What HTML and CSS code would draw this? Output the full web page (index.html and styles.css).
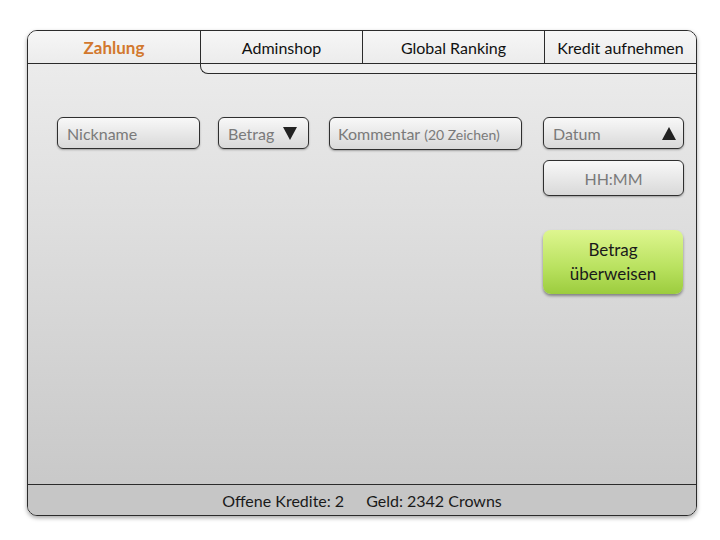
FILE: index.html
```html
<!DOCTYPE html>
<html>
<head>
  <meta charset="utf-8">
  <title>Zahlung</title>
  <link rel="stylesheet" href="styles.css">
</head>
<body>
  <div class="window">
    <div class="tabs">
      <div class="tab active">Zahlung</div>
      <div class="tab tab-admin">Adminshop</div>
      <div class="tab tab-ranking">Global Ranking</div>
      <div class="tab tab-kredit">Kredit aufnehmen</div>
    </div>
    <div class="tab-step"></div>

    <div class="content">
      <div class="field nickname">Nickname</div>
      <div class="field betrag">Betrag <span class="arrow-down"></span></div>
      <div class="field kommentar">Kommentar <small>(20 Zeichen)</small></div>

      <div class="side">
        <div class="field datum">Datum <span class="arrow-up"></span></div>
        <div class="field time">HH:MM</div>
        <button class="send">Betrag<br>überweisen</button>
      </div>
    </div>

    <div class="status">
      <span>Offene Kredite: 2</span>
      <span>Geld: 2342 Crowns</span>
    </div>
  </div>
</body>
</html>
```

FILE: styles.css
```css
* {
  margin: 0;
  padding: 0;
  box-sizing: border-box;
}

body {
  background: #fff;
  font-family: Lato, "Open Sans", sans-serif;
  width: 720px;
  height: 540px;
}

.window {
  margin: 30px 0 0 27px;
  width: 670px;
  height: 486px;
  border: 1px solid #2b2b2b;
  border-radius: 10px;
  background: linear-gradient(to bottom, #eeeeee, #c6c6c6);
  box-shadow: 0 2px 4px rgba(0, 0, 0, 0.35);
  display: flex;
  flex-direction: column;
  overflow: hidden;
}

/* Tab-Leiste */
.tabs {
  display: flex;
  height: 33px;
  border-bottom: 1px solid #2b2b2b;
  background: linear-gradient(to bottom, #f6f6f6, #ececec);
}

.tab {
  display: flex;
  align-items: center;
  justify-content: center;
  font-size: 16px;
  color: #111;
  border-left: 1px solid #2b2b2b;
}

.tab.active {
  width: 172px;
  border-left: none;
  color: #d2782e;
  font-weight: bold;
  font-size: 17px;
}

.tab-admin { width: 162px; }
.tab-ranking { width: 182px; }
.tab-kredit { flex: 1; }

.tab-step {
  margin-left: 172px;
  height: 10px;
  border-left: 1px solid #2b2b2b;
  border-bottom: 1px solid #2b2b2b;
  border-bottom-left-radius: 8px;
  background: #efefef;
}

/* Eingabefelder */
.content {
  flex: 1;
  display: flex;
  align-items: flex-start;
  padding: 43px 11px 0 29px;
}

.field {
  height: 32px;
  display: flex;
  align-items: center;
  padding: 0 9px;
  font-size: 16px;
  color: #7a7a7a;
  border: 1px solid #2f2f2f;
  border-radius: 6px;
  background: linear-gradient(to bottom, #f8f8f8, #d9d9d9);
  box-shadow: 0 1px 2px rgba(0, 0, 0, 0.3);
}

.field small {
  font-size: 14px;
  margin-left: 4px;
  margin-top: 2px;
}

.nickname { width: 143px; }

.betrag {
  width: 91px;
  margin-left: 18px;
  justify-content: space-between;
  padding-right: 11px;
}

.kommentar {
  width: 193px;
  height: 33px;
  margin-left: 20px;
  padding-left: 8px;
}

.side {
  width: 141px;
  margin-left: 21px;
  display: flex;
  flex-direction: column;
}

.datum {
  justify-content: space-between;
  padding-right: 7px;
}

.time {
  height: 36px;
  margin-top: 11px;
  justify-content: center;
}

.arrow-down {
  width: 0;
  height: 0;
  border-left: 7px solid transparent;
  border-right: 7px solid transparent;
  border-top: 13px solid #222;
}

.arrow-up {
  width: 0;
  height: 0;
  border-left: 7px solid transparent;
  border-right: 7px solid transparent;
  border-bottom: 13px solid #222;
}

.send {
  margin-top: 34px;
  height: 64px;
  width: 140px;
  font-family: inherit;
  font-size: 17px;
  line-height: 24px;
  color: #1a1a1a;
  border: none;
  border-radius: 8px;
  background: linear-gradient(to bottom, #def68f, #b8e15e 60%, #9ccc3e);
  box-shadow: 0 2px 3px rgba(0, 0, 0, 0.4);
}

/* Statuszeile */
.status {
  height: 31px;
  border-top: 1px solid #2b2b2b;
  background: #c6c6c6;
  display: flex;
  justify-content: center;
  align-items: center;
  gap: 22px;
  font-size: 16px;
  color: #1a1a1a;
}
```
